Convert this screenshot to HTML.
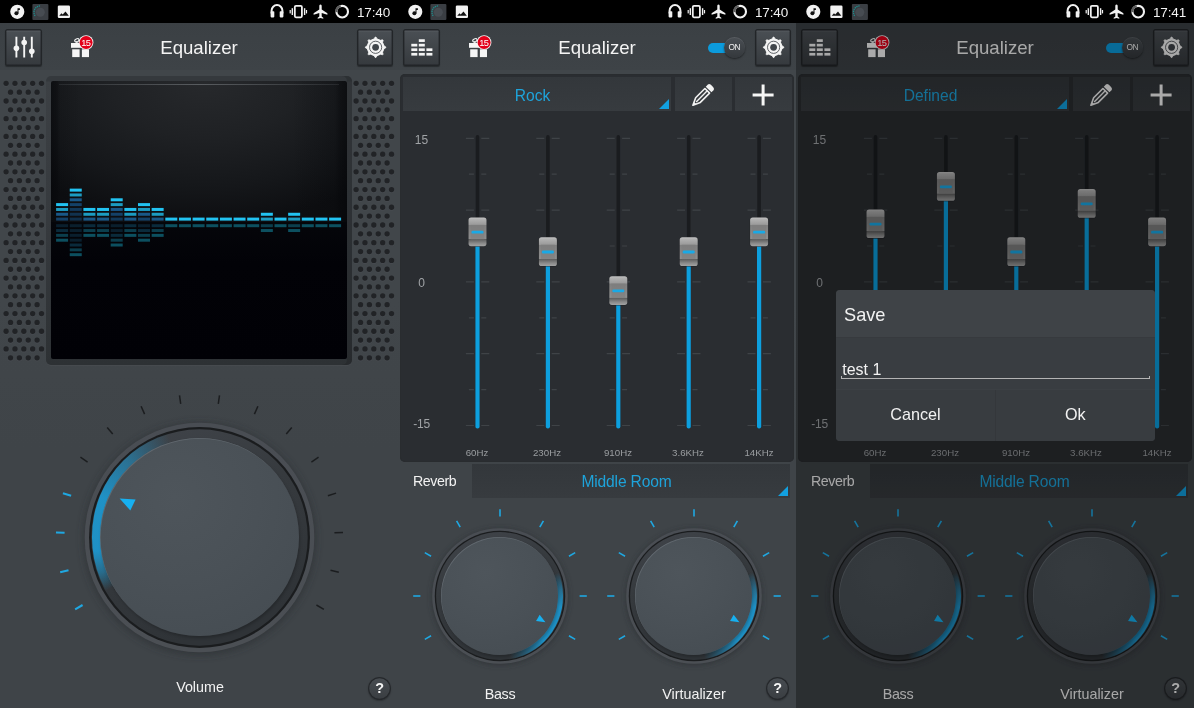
<!DOCTYPE html><html lang="en"><head><meta charset="utf-8"><title>Equalizer</title><style>
*{box-sizing:border-box;margin:0;padding:0}
html,body{width:1194px;height:708px;overflow:hidden;background:#3e4347}
body{font-family:"Liberation Sans",sans-serif;position:relative;-webkit-font-smoothing:antialiased}
.p{position:absolute;top:0;width:398px;height:708px;overflow:hidden;background:linear-gradient(#41464a 0,#41464a 300px,#3f4448 450px)}
.sb{position:absolute;left:0;top:0;width:398px;height:23px;background:#000}
.sbi{position:absolute;left:0;top:0}
.title,.lbl,.rv,.dd,.db,.hz,.time,.dlg,.help,.swk,.gift{will-change:transform}
.time{position:absolute;left:356.6px;top:4.6px;font-size:13.5px;line-height:16px;color:#f2f2f2;letter-spacing:-0.15px}
.tb{position:absolute;left:0;top:23px;width:398px;height:47.4px;background:linear-gradient(#3b4044,#3e4347)}
.btn{position:absolute;top:6.2px;width:36.2px;height:36.4px;border-radius:2px;background:linear-gradient(#4b5055,#35393d);box-shadow:inset 0 0 0 1.4px #222528, inset 0 2.4px 0 0 rgba(255,255,255,0.07), 0 1px 1px rgba(0,0,0,0.35)}
.btn svg{position:absolute;left:0;top:0}
.gift{position:absolute;left:68px;top:11px}
.title{position:absolute;left:99px;width:200px;top:14.3px;text-align:center;color:#f4f4f4;font-size:18.6px;line-height:22px}
.sw{position:absolute;left:309px;top:14px;width:50px;height:22px}
.swt{position:absolute;left:1px;top:5.7px;width:30px;height:10px;border-radius:5px;background:#0c9bdc}
.swk{position:absolute;left:17.2px;top:0.4px;width:20.6px;height:20.6px;border-radius:50%;background:linear-gradient(#4a4f54,#34383c);box-shadow:0 1px 2px rgba(0,0,0,0.5),inset 0 1px 0 rgba(255,255,255,0.08);color:#f2f2f2;font-size:8.4px;line-height:20.6px;text-align:center;letter-spacing:-0.5px}
.dots{position:absolute}
.frame{position:absolute;left:46px;top:76px;width:306px;height:289px;border-radius:5px;background:linear-gradient(#35393d 0,#35393d 5px,#3c4044 6px,#363a3e 50%,#2d3134 100%);box-shadow:0 1px 0 rgba(255,255,255,0.03),inset -5px 0 0 rgba(28,31,34,0.35)}
.screen{position:absolute;left:5px;top:5px;width:296px;height:278px;border-radius:2px;background:linear-gradient(90deg,rgba(4,5,8,0.55) 0,rgba(4,5,8,0.4) 6px,rgba(4,5,8,0.12) 9px,rgba(4,5,8,0) 30px,rgba(4,5,8,0) 240px,rgba(4,5,8,0.2) 284px,rgba(4,5,8,0.45) 289px,rgba(4,5,8,0.6) 100%) 0 0/100% 141px no-repeat,radial-gradient(ellipse 80% 100% at 52% 0%,#27292c 0%,#1f2124 40%,#15171a 75%,#0d0e11 100%) 0 0/100% 141px no-repeat,linear-gradient(#05060a 0%,#020207 30%,#010106 100%) 0 141px/100% 137px no-repeat;background-color:#020207;overflow:hidden}
.gl{position:absolute;left:8px;right:8px;top:2.7px;height:1.8px;background:linear-gradient(90deg,rgba(80,84,88,0.3),rgba(110,114,118,0.7) 50%,rgba(80,84,88,0.3));filter:blur(0.4px)}
.spec{position:absolute;left:0;top:0}
.knob{position:absolute}
.knob svg{position:absolute;left:0;top:0}
.arc{position:absolute;border-radius:50%}
.face{position:absolute;border-radius:50%;background:radial-gradient(circle at 38% 30%,#4e555b 0%,#4a5157 45%,#444b51 100%);box-shadow:inset 0.6px 0.8px 0.5px rgba(130,137,144,0.4),1px 2px 3px rgba(0,0,0,0.22)}
.lbl{position:absolute;text-align:center;color:#f2f2f2;font-size:14.3px;line-height:18px}
.help{position:absolute;width:23.4px;height:23.4px;border-radius:50%;background:linear-gradient(#484d52,#393d41);box-shadow:inset 0 0 0 1.2px #25282b,0 1px 1.5px rgba(0,0,0,0.25);color:#f6f6f6;font-weight:bold;font-size:14.4px;line-height:23.6px;text-align:center}
.eq{position:absolute;left:2px;top:73.6px;width:394px;height:388.6px;border-radius:5px;background:#2a2d31;box-shadow:inset 0 0 0 1px #292c2f;padding:0}
.eqi{position:absolute;left:0.5px;top:0;width:393px;height:388.6px}
.dd{position:absolute;background:linear-gradient(#33373b,#373b3f);color:#1ea3da;font-size:15.6px;text-align:center}
.dd span{display:block;line-height:34px;position:relative;top:2px;padding-right:9px}
.rvd span{top:0.6px;letter-spacing:-0.15px}
.dd svg{position:absolute;left:0;top:0}
.tri{position:absolute;right:2px;bottom:2px;width:0;height:0;border-left:10.5px solid transparent;border-bottom:10px solid #12a0e0}
.sl{position:absolute;left:0;top:37px}
.db{position:absolute;left:0;width:41px;text-align:center;color:#a0a3a6;font-size:12px;line-height:14px}
.hz{position:absolute;top:373.9px;width:60px;text-align:center;color:#9b9ea1;font-size:9.7px;line-height:12px}
.rv{position:absolute;left:14.8px;top:472px;color:#f2f2f2;font-size:14.2px;line-height:18px;letter-spacing:-0.4px}
.rvd{left:73.8px;top:464.4px;width:318px;height:34.4px}
.dim{position:absolute;left:0;top:23px;width:398px;height:685px;background:rgba(0,0,0,0.31)}
.dlg{position:absolute;left:39.6px;top:289.6px;width:318.8px;height:151.4px;border-radius:4px;background:#393d41;overflow:hidden;color:#f2f2f2}
.dt{height:48px;background:#3f4347;border-bottom:1px solid #373a3e;padding:13.8px 0 0 8px;font-size:18.2px;line-height:22px}
.dbody{height:51.4px;position:relative}
.inp{position:absolute;left:4.6px;right:4.6px;top:19.5px;height:21.6px;font-size:16px;line-height:23px;padding-left:0.6px;border-bottom:1.3px solid #b4b4b4;border-left:1px solid #b4b4b4;border-right:1px solid #b4b4b4;border-image:linear-gradient(transparent 85%,#b4b4b4 85%) 1}
.dbtn{position:absolute;left:0;right:0;top:99.4px;height:52px;display:flex;background:#383c40;border-top:1px solid #3c4044}
.dbtn div{flex:1;text-align:center;font-size:16.2px;line-height:48px}
.dbtn div+div{border-left:1px solid #34373b}
</style></head><body><div class="p" style="left:0"><div class="sb"><svg class="sbi" width="398" height="23" viewBox="0 0 398 23"><circle cx="17.3" cy="11.85" r="7.05" fill="#f2f2f2"/><circle cx="16.400000000000002" cy="13.2" r="2" fill="#111"/><path d="M17.5 13.2 V8.2 H19.900000000000002 V9.9 H18.5 V13.2 z" fill="#111"/><rect x="32.4" y="3.9" width="16" height="16" rx="1" fill="#3a3e43"/><circle cx="40.3" cy="12.2" r="4.5" fill="#474c52"/><path d="M35.13 15.79 A6.3 6.3 0 0 1 40.3 5.9" fill="none" stroke="#1f8c8c" stroke-width="1.3" stroke-dasharray="1.3 0.7"/><rect x="57.8" y="5.4" width="12.2" height="12.6" rx="1.3" fill="#f2f2f2"/><path d="M59.199999999999996 15.7 l2.3 -2.5 l1.2 1.3 l2.8 -3 l3.3 4.2 z" fill="#111"/><g fill="none" stroke="#f2f2f2" stroke-width="2"><path d="M271.6 13.5 v-3 a5.4 5.4 0 0 1 10.8 0 v3"/></g>
<rect x="270.6" y="11.2" width="3.7" height="6.2" rx="0.8" fill="#f2f2f2"/><rect x="279.7" y="11.2" width="3.7" height="6.2" rx="0.8" fill="#f2f2f2"/>
<rect x="294.8" y="5.9" width="7.1" height="11.4" rx="1.2" fill="none" stroke="#f2f2f2" stroke-width="1.8"/>
<rect x="291.6" y="8.2" width="1.4" height="6.8" fill="#f2f2f2"/><rect x="289.6" y="10" width="1.2" height="3.4" fill="#f2f2f2"/>
<rect x="303.9" y="8.2" width="1.4" height="6.8" fill="#f2f2f2"/><rect x="305.9" y="10" width="1.2" height="3.4" fill="#f2f2f2"/>
<path d="M320.5 4.6 c0.9 0 1.2 0.8 1.2 1.6 v3.4 l5.7 3.6 v1.5 l-5.7 -1.8 v3.6 l1.6 1.2 v1.1 l-2.8 -0.8 l-2.8 0.8 v-1.1 l1.6 -1.2 v-3.6 l-5.7 1.8 v-1.5 l5.7 -3.6 v-3.4 c0 -0.8 0.3 -1.6 1.2 -1.6 z" fill="#f2f2f2"/>
<circle cx="342.2" cy="11.7" r="5.8" fill="none" stroke="#f2f2f2" stroke-width="2.1"/><path d="M336.4 12.2 A5.8 5.8 0 0 1 340.7 6.1" fill="none" stroke="#5e5e5e" stroke-width="2.3"/>
<path d="M342.4 4.4 v3 M339 5 l1.2 2.6" stroke="#000" stroke-width="0" fill="none"/></svg><span class="time">17:40</span></div><div class="tb"><div class="btn" style="left:5.2px;width:36.5px"><svg width="36" height="36" viewBox="4.8 29.5 36 36"><g stroke="#f4f4f4" stroke-width="1.9" stroke-linecap="butt"><path d="M16.2 37.3V58M24 37.3V58M31.6 37.3V58"/></g><circle cx="16.2" cy="48.7" r="2.8" fill="#f4f4f4"/><circle cx="24" cy="43" r="2.8" fill="#f4f4f4"/><circle cx="31.6" cy="51.8" r="2.8" fill="#f4f4f4"/></svg></div><svg class="gift" width="26" height="26" viewBox="68 34 26 26"><ellipse cx="76.9" cy="40.3" rx="2.3" ry="1.5" transform="rotate(-25 76.9 40.3)" fill="none" stroke="#f4f4f4" stroke-width="1.1"/><path d="M76.2 41.4 L77.4 43.2" stroke="#f4f4f4" stroke-width="1.1"/><rect x="71" y="43" width="19" height="4.8" fill="#f6f6f6"/><rect x="72.2" y="49.3" width="7.4" height="7.8" fill="#f6f6f6"/><rect x="81.9" y="49.3" width="7.1" height="7.8" fill="#f6f6f6"/><circle cx="86.1" cy="42.5" r="7.3" fill="#f4f4f4"/><circle cx="86.1" cy="42.5" r="6.5" fill="#e2001a"/><text x="85.8" y="45.7" font-size="9.3" text-anchor="middle" fill="#fff" font-family="Liberation Sans, sans-serif" letter-spacing="-0.5">15</text></svg><div class="title">Equalizer</div><div class="btn" style="left:356.5px"><svg width="36" height="36" viewBox="0 0 36 36"><path d="M17.11 9.93 L18.21 8.06 L18.99 8.06 L20.09 9.93 L23.47 11.33 L25.57 10.78 L26.12 11.33 L25.57 13.43 L26.97 16.81 L28.84 17.91 L28.84 18.69 L26.97 19.79 L25.57 23.17 L26.12 25.27 L25.57 25.82 L23.47 25.27 L20.09 26.67 L18.99 28.54 L18.21 28.54 L17.11 26.67 L13.73 25.27 L11.63 25.82 L11.08 25.27 L11.63 23.17 L10.23 19.79 L8.36 18.69 L8.36 17.91 L10.23 16.81 L11.63 13.43 L11.08 11.33 L11.63 10.78 L13.73 11.33Z" fill="#f4f4f4" stroke="#f4f4f4" stroke-width="0.8" stroke-linejoin="round"/><circle cx="18.6" cy="18.3" r="8.4" fill="#f4f4f4"/><circle cx="18.6" cy="18.3" r="6.1" fill="none" stroke="#3b3f44" stroke-width="0.8"/><circle cx="18.6" cy="18.3" r="3.4" fill="#40454a"/></svg></div></div><svg class="dots" style="left:0px;top:76px" width="46" height="290" viewBox="0 0 46 290"><defs><g id="dla"><circle cx="6.1" cy="0.7" r="2.9" fill="#4a4f54" opacity="0.55"/><circle cx="14.96" cy="0.7" r="2.9" fill="#4a4f54" opacity="0.55"/><circle cx="23.81" cy="0.7" r="2.9" fill="#4a4f54" opacity="0.55"/><circle cx="32.66" cy="0.7" r="2.9" fill="#4a4f54" opacity="0.55"/><circle cx="41.52" cy="0.7" r="2.9" fill="#4a4f54" opacity="0.55"/><circle cx="6.1" cy="0" r="2.65" fill="#212326"/><circle cx="14.96" cy="0" r="2.65" fill="#212326"/><circle cx="23.81" cy="0" r="2.65" fill="#212326"/><circle cx="32.66" cy="0" r="2.65" fill="#212326"/><circle cx="41.52" cy="0" r="2.65" fill="#212326"/></g><g id="dlb"><circle cx="10.53" cy="0.7" r="2.9" fill="#4a4f54" opacity="0.55"/><circle cx="19.38" cy="0.7" r="2.9" fill="#4a4f54" opacity="0.55"/><circle cx="28.24" cy="0.7" r="2.9" fill="#4a4f54" opacity="0.55"/><circle cx="37.09" cy="0.7" r="2.9" fill="#4a4f54" opacity="0.55"/><circle cx="10.53" cy="0" r="2.65" fill="#212326"/><circle cx="19.38" cy="0" r="2.65" fill="#212326"/><circle cx="28.24" cy="0" r="2.65" fill="#212326"/><circle cx="37.09" cy="0" r="2.65" fill="#212326"/></g></defs><use href="#dla" y="7.3"/><use href="#dlb" y="16.15"/><use href="#dla" y="25.01"/><use href="#dlb" y="33.86"/><use href="#dla" y="42.72"/><use href="#dlb" y="51.58"/><use href="#dla" y="60.43"/><use href="#dlb" y="69.28"/><use href="#dla" y="78.14"/><use href="#dlb" y="87"/><use href="#dla" y="95.85"/><use href="#dlb" y="104.7"/><use href="#dla" y="113.56"/><use href="#dlb" y="122.42"/><use href="#dla" y="131.27"/><use href="#dlb" y="140.12"/><use href="#dla" y="148.98"/><use href="#dlb" y="157.83"/><use href="#dla" y="166.69"/><use href="#dlb" y="175.55"/><use href="#dla" y="184.4"/><use href="#dlb" y="193.25"/><use href="#dla" y="202.11"/><use href="#dlb" y="210.97"/><use href="#dla" y="219.82"/><use href="#dlb" y="228.68"/><use href="#dla" y="237.53"/><use href="#dlb" y="246.38"/><use href="#dla" y="255.24"/><use href="#dlb" y="264.1"/><use href="#dla" y="272.95"/><use href="#dlb" y="281.81"/></svg><svg class="dots" style="left:350.4px;top:76px" width="46" height="290" viewBox="0 0 46 290"><defs><g id="dra"><circle cx="6.1" cy="0.7" r="2.9" fill="#4a4f54" opacity="0.55"/><circle cx="14.96" cy="0.7" r="2.9" fill="#4a4f54" opacity="0.55"/><circle cx="23.81" cy="0.7" r="2.9" fill="#4a4f54" opacity="0.55"/><circle cx="32.66" cy="0.7" r="2.9" fill="#4a4f54" opacity="0.55"/><circle cx="41.52" cy="0.7" r="2.9" fill="#4a4f54" opacity="0.55"/><circle cx="6.1" cy="0" r="2.65" fill="#212326"/><circle cx="14.96" cy="0" r="2.65" fill="#212326"/><circle cx="23.81" cy="0" r="2.65" fill="#212326"/><circle cx="32.66" cy="0" r="2.65" fill="#212326"/><circle cx="41.52" cy="0" r="2.65" fill="#212326"/></g><g id="drb"><circle cx="10.53" cy="0.7" r="2.9" fill="#4a4f54" opacity="0.55"/><circle cx="19.38" cy="0.7" r="2.9" fill="#4a4f54" opacity="0.55"/><circle cx="28.24" cy="0.7" r="2.9" fill="#4a4f54" opacity="0.55"/><circle cx="37.09" cy="0.7" r="2.9" fill="#4a4f54" opacity="0.55"/><circle cx="10.53" cy="0" r="2.65" fill="#212326"/><circle cx="19.38" cy="0" r="2.65" fill="#212326"/><circle cx="28.24" cy="0" r="2.65" fill="#212326"/><circle cx="37.09" cy="0" r="2.65" fill="#212326"/></g></defs><use href="#dra" y="7.3"/><use href="#drb" y="16.15"/><use href="#dra" y="25.01"/><use href="#drb" y="33.86"/><use href="#dra" y="42.72"/><use href="#drb" y="51.58"/><use href="#dra" y="60.43"/><use href="#drb" y="69.28"/><use href="#dra" y="78.14"/><use href="#drb" y="87"/><use href="#dra" y="95.85"/><use href="#drb" y="104.7"/><use href="#dra" y="113.56"/><use href="#drb" y="122.42"/><use href="#dra" y="131.27"/><use href="#drb" y="140.12"/><use href="#dra" y="148.98"/><use href="#drb" y="157.83"/><use href="#dra" y="166.69"/><use href="#drb" y="175.55"/><use href="#dra" y="184.4"/><use href="#drb" y="193.25"/><use href="#dra" y="202.11"/><use href="#drb" y="210.97"/><use href="#dra" y="219.82"/><use href="#drb" y="228.68"/><use href="#dra" y="237.53"/><use href="#drb" y="246.38"/><use href="#dra" y="255.24"/><use href="#drb" y="264.1"/><use href="#dra" y="272.95"/><use href="#drb" y="281.81"/></svg><div class="frame"><div class="screen"><div class="gl"></div><svg class="spec" width="296" height="278" viewBox="51 81 296 278"><rect x="56.1" y="217.6" width="12" height="3" fill="#144168"/><rect x="56.1" y="224.2" width="12" height="3" fill="#0c283a" opacity="0.75"/><rect x="56.1" y="212.77" width="12" height="3" fill="#195888"/><rect x="56.1" y="229.03" width="12" height="3" fill="#0d3549" opacity="0.8"/><rect x="56.1" y="207.94" width="12" height="3" fill="#1c9cc2"/><rect x="56.1" y="233.86" width="12" height="3" fill="#0e4c5e" opacity="0.8"/><rect x="56.1" y="203.11" width="12" height="3" fill="#22c3f2"/><rect x="56.1" y="238.69" width="12" height="3" fill="#0f6375" opacity="0.8"/><rect x="69.75" y="217.6" width="12" height="3" fill="#102f4a"/><rect x="69.75" y="224.2" width="12" height="3" fill="#0c283a" opacity="0.75"/><rect x="69.75" y="212.77" width="12" height="3" fill="#11324f"/><rect x="69.75" y="229.03" width="12" height="3" fill="#0c283a" opacity="0.75"/><rect x="69.75" y="207.94" width="12" height="3" fill="#123858"/><rect x="69.75" y="233.86" width="12" height="3" fill="#0c283a" opacity="0.75"/><rect x="69.75" y="203.11" width="12" height="3" fill="#144168"/><rect x="69.75" y="238.69" width="12" height="3" fill="#0c283a" opacity="0.75"/><rect x="69.75" y="198.28" width="12" height="3" fill="#195888"/><rect x="69.75" y="243.52" width="12" height="3" fill="#0d3549" opacity="0.8"/><rect x="69.75" y="193.45" width="12" height="3" fill="#1c9cc2"/><rect x="69.75" y="248.35" width="12" height="3" fill="#0e4c5e" opacity="0.8"/><rect x="69.75" y="188.62" width="12" height="3" fill="#22c3f2"/><rect x="69.75" y="253.18" width="12" height="3" fill="#0f6375" opacity="0.8"/><rect x="83.4" y="217.6" width="12" height="3" fill="#195888"/><rect x="83.4" y="224.2" width="12" height="3" fill="#0d3549" opacity="0.8"/><rect x="83.4" y="212.77" width="12" height="3" fill="#1c9cc2"/><rect x="83.4" y="229.03" width="12" height="3" fill="#0e4c5e" opacity="0.8"/><rect x="83.4" y="207.94" width="12" height="3" fill="#22c3f2"/><rect x="83.4" y="233.86" width="12" height="3" fill="#0f6375" opacity="0.8"/><rect x="97.05" y="217.6" width="12" height="3" fill="#195888"/><rect x="97.05" y="224.2" width="12" height="3" fill="#0d3549" opacity="0.8"/><rect x="97.05" y="212.77" width="12" height="3" fill="#1c9cc2"/><rect x="97.05" y="229.03" width="12" height="3" fill="#0e4c5e" opacity="0.8"/><rect x="97.05" y="207.94" width="12" height="3" fill="#22c3f2"/><rect x="97.05" y="233.86" width="12" height="3" fill="#0f6375" opacity="0.8"/><rect x="110.7" y="217.6" width="12" height="3" fill="#123858"/><rect x="110.7" y="224.2" width="12" height="3" fill="#0c283a" opacity="0.75"/><rect x="110.7" y="212.77" width="12" height="3" fill="#144168"/><rect x="110.7" y="229.03" width="12" height="3" fill="#0c283a" opacity="0.75"/><rect x="110.7" y="207.94" width="12" height="3" fill="#195888"/><rect x="110.7" y="233.86" width="12" height="3" fill="#0d3549" opacity="0.8"/><rect x="110.7" y="203.11" width="12" height="3" fill="#1c9cc2"/><rect x="110.7" y="238.69" width="12" height="3" fill="#0e4c5e" opacity="0.8"/><rect x="110.7" y="198.28" width="12" height="3" fill="#22c3f2"/><rect x="110.7" y="243.52" width="12" height="3" fill="#0f6375" opacity="0.8"/><rect x="124.35" y="217.6" width="12" height="3" fill="#195888"/><rect x="124.35" y="224.2" width="12" height="3" fill="#0d3549" opacity="0.8"/><rect x="124.35" y="212.77" width="12" height="3" fill="#1c9cc2"/><rect x="124.35" y="229.03" width="12" height="3" fill="#0e4c5e" opacity="0.8"/><rect x="124.35" y="207.94" width="12" height="3" fill="#22c3f2"/><rect x="124.35" y="233.86" width="12" height="3" fill="#0f6375" opacity="0.8"/><rect x="138" y="217.6" width="12" height="3" fill="#144168"/><rect x="138" y="224.2" width="12" height="3" fill="#0c283a" opacity="0.75"/><rect x="138" y="212.77" width="12" height="3" fill="#195888"/><rect x="138" y="229.03" width="12" height="3" fill="#0d3549" opacity="0.8"/><rect x="138" y="207.94" width="12" height="3" fill="#1c9cc2"/><rect x="138" y="233.86" width="12" height="3" fill="#0e4c5e" opacity="0.8"/><rect x="138" y="203.11" width="12" height="3" fill="#22c3f2"/><rect x="138" y="238.69" width="12" height="3" fill="#0f6375" opacity="0.8"/><rect x="151.65" y="217.6" width="12" height="3" fill="#195888"/><rect x="151.65" y="224.2" width="12" height="3" fill="#0d3549" opacity="0.8"/><rect x="151.65" y="212.77" width="12" height="3" fill="#1c9cc2"/><rect x="151.65" y="229.03" width="12" height="3" fill="#0e4c5e" opacity="0.8"/><rect x="151.65" y="207.94" width="12" height="3" fill="#22c3f2"/><rect x="151.65" y="233.86" width="12" height="3" fill="#0f6375" opacity="0.8"/><rect x="165.3" y="217.6" width="12" height="3" fill="#22c3f2"/><rect x="165.3" y="224.2" width="12" height="3" fill="#0f6375" opacity="0.8"/><rect x="178.95" y="217.6" width="12" height="3" fill="#22c3f2"/><rect x="178.95" y="224.2" width="12" height="3" fill="#0f6375" opacity="0.8"/><rect x="192.6" y="217.6" width="12" height="3" fill="#22c3f2"/><rect x="192.6" y="224.2" width="12" height="3" fill="#0f6375" opacity="0.8"/><rect x="206.25" y="217.6" width="12" height="3" fill="#22c3f2"/><rect x="206.25" y="224.2" width="12" height="3" fill="#0f6375" opacity="0.8"/><rect x="219.9" y="217.6" width="12" height="3" fill="#22c3f2"/><rect x="219.9" y="224.2" width="12" height="3" fill="#0f6375" opacity="0.8"/><rect x="233.55" y="217.6" width="12" height="3" fill="#22c3f2"/><rect x="233.55" y="224.2" width="12" height="3" fill="#0f6375" opacity="0.8"/><rect x="247.2" y="217.6" width="12" height="3" fill="#22c3f2"/><rect x="247.2" y="224.2" width="12" height="3" fill="#0f6375" opacity="0.8"/><rect x="260.85" y="217.6" width="12" height="3" fill="#1c9cc2"/><rect x="260.85" y="224.2" width="12" height="3" fill="#0e4c5e" opacity="0.8"/><rect x="260.85" y="212.77" width="12" height="3" fill="#22c3f2"/><rect x="260.85" y="229.03" width="12" height="3" fill="#0f6375" opacity="0.8"/><rect x="274.5" y="217.6" width="12" height="3" fill="#22c3f2"/><rect x="274.5" y="224.2" width="12" height="3" fill="#0f6375" opacity="0.8"/><rect x="288.15" y="217.6" width="12" height="3" fill="#1c9cc2"/><rect x="288.15" y="224.2" width="12" height="3" fill="#0e4c5e" opacity="0.8"/><rect x="288.15" y="212.77" width="12" height="3" fill="#22c3f2"/><rect x="288.15" y="229.03" width="12" height="3" fill="#0f6375" opacity="0.8"/><rect x="301.8" y="217.6" width="12" height="3" fill="#22c3f2"/><rect x="301.8" y="224.2" width="12" height="3" fill="#0f6375" opacity="0.8"/><rect x="315.45" y="217.6" width="12" height="3" fill="#22c3f2"/><rect x="315.45" y="224.2" width="12" height="3" fill="#0f6375" opacity="0.8"/><rect x="329.1" y="217.6" width="12" height="3" fill="#22c3f2"/><rect x="329.1" y="224.2" width="12" height="3" fill="#0f6375" opacity="0.8"/></svg></div></div><div class="knob" style="left:41.1px;top:378.8px;width:317px;height:317px"><svg width="317" height="317" viewBox="-158.5 -158.5 317 317"><defs><linearGradient id="k1o" x1="0" y1="0" x2="0" y2="1"><stop offset="0" stop-color="#494d53"/><stop offset="1" stop-color="#4b4f54"/></linearGradient><linearGradient id="k1i" x1="0" y1="0" x2="0.35" y2="1"><stop offset="0" stop-color="#41454b"/><stop offset="0.45" stop-color="#363a3e"/><stop offset="1" stop-color="#2f3337"/></linearGradient><filter id="k1b" x="-20%" y="-20%" width="140%" height="140%"><feGaussianBlur stdDeviation="3.8"/></filter></defs><circle cx="0" cy="1.5" r="116.3" fill="#2a2d31" opacity="0.6" filter="url(#k1b)"/><line x1="-116.91" y1="67.5" x2="-124.36" y2="71.8" stroke="#1fa8e2" stroke-width="2.1"/><line x1="-130.99" y1="32.66" x2="-139.33" y2="34.74" stroke="#1fa8e2" stroke-width="2.1"/><line x1="-134.92" y1="-4.71" x2="-143.51" y2="-5.01" stroke="#1fa8e2" stroke-width="2.1"/><line x1="-128.39" y1="-41.72" x2="-136.57" y2="-44.37" stroke="#1fa8e2" stroke-width="2.1"/><line x1="-111.92" y1="-75.49" x2="-119.05" y2="-80.3" stroke="#1b1d1f" stroke-width="1.5"/><line x1="-86.78" y1="-103.42" x2="-92.3" y2="-110" stroke="#1b1d1f" stroke-width="1.5"/><line x1="-54.91" y1="-123.33" x2="-58.41" y2="-131.19" stroke="#1b1d1f" stroke-width="1.5"/><line x1="-18.79" y1="-133.69" x2="-19.99" y2="-142.2" stroke="#1b1d1f" stroke-width="1.5"/><line x1="18.79" y1="-133.69" x2="19.99" y2="-142.2" stroke="#1b1d1f" stroke-width="1.5"/><line x1="54.91" y1="-123.33" x2="58.41" y2="-131.19" stroke="#1b1d1f" stroke-width="1.5"/><line x1="86.78" y1="-103.42" x2="92.3" y2="-110" stroke="#1b1d1f" stroke-width="1.5"/><line x1="111.92" y1="-75.49" x2="119.05" y2="-80.3" stroke="#1b1d1f" stroke-width="1.5"/><line x1="128.39" y1="-41.72" x2="136.57" y2="-44.37" stroke="#1b1d1f" stroke-width="1.5"/><line x1="134.92" y1="-4.71" x2="143.51" y2="-5.01" stroke="#1b1d1f" stroke-width="1.5"/><line x1="130.99" y1="32.66" x2="139.33" y2="34.74" stroke="#1b1d1f" stroke-width="1.5"/><line x1="116.91" y1="67.5" x2="124.36" y2="71.8" stroke="#1b1d1f" stroke-width="1.5"/><circle r="114.8" fill="url(#k1o)"/><circle r="110.44" fill="#1a1c1e"/><circle r="108.2" fill="url(#k1i)"/></svg><div class="arc" style="left:50.65px;top:50.65px;width:215.71px;height:215.71px;background:conic-gradient(from 0deg,rgba(30,150,205,0) 0deg,rgba(30,150,205,0) 240deg,rgba(30,150,205,0.55) 250deg,rgba(30,150,205,0.95) 262deg,rgba(30,150,205,0.95) 292deg,rgba(30,150,205,0.55) 318deg,rgba(30,150,205,0) 343deg,rgba(30,150,205,0) 360deg)"></div><div class="face" style="left:59.31px;top:59.31px;width:198.37px;height:198.37px"></div><svg style="position:absolute;left:0;top:0" width="317" height="317" viewBox="-158.5 -158.5 317 317"><path d="M-79.86 -38.95L-63.91 -37.88L-69.19 -27.04Z" fill="#17b0f0"/></svg></div><div class="lbl" style="left:100px;width:200px;top:678px">Volume</div><div class="help" style="left:367.8px;top:677.4px">?</div></div><div class="p" style="left:398px"><div class="sb"><svg class="sbi" width="398" height="23" viewBox="0 0 398 23"><circle cx="17.3" cy="11.85" r="7.05" fill="#f2f2f2"/><circle cx="16.400000000000002" cy="13.2" r="2" fill="#111"/><path d="M17.5 13.2 V8.2 H19.900000000000002 V9.9 H18.5 V13.2 z" fill="#111"/><rect x="32.4" y="3.9" width="16" height="16" rx="1" fill="#3a3e43"/><circle cx="40.3" cy="12.2" r="4.5" fill="#474c52"/><path d="M35.13 15.79 A6.3 6.3 0 0 1 40.3 5.9" fill="none" stroke="#1f8c8c" stroke-width="1.3" stroke-dasharray="1.3 0.7"/><rect x="57.8" y="5.4" width="12.2" height="12.6" rx="1.3" fill="#f2f2f2"/><path d="M59.199999999999996 15.7 l2.3 -2.5 l1.2 1.3 l2.8 -3 l3.3 4.2 z" fill="#111"/><g fill="none" stroke="#f2f2f2" stroke-width="2"><path d="M271.6 13.5 v-3 a5.4 5.4 0 0 1 10.8 0 v3"/></g>
<rect x="270.6" y="11.2" width="3.7" height="6.2" rx="0.8" fill="#f2f2f2"/><rect x="279.7" y="11.2" width="3.7" height="6.2" rx="0.8" fill="#f2f2f2"/>
<rect x="294.8" y="5.9" width="7.1" height="11.4" rx="1.2" fill="none" stroke="#f2f2f2" stroke-width="1.8"/>
<rect x="291.6" y="8.2" width="1.4" height="6.8" fill="#f2f2f2"/><rect x="289.6" y="10" width="1.2" height="3.4" fill="#f2f2f2"/>
<rect x="303.9" y="8.2" width="1.4" height="6.8" fill="#f2f2f2"/><rect x="305.9" y="10" width="1.2" height="3.4" fill="#f2f2f2"/>
<path d="M320.5 4.6 c0.9 0 1.2 0.8 1.2 1.6 v3.4 l5.7 3.6 v1.5 l-5.7 -1.8 v3.6 l1.6 1.2 v1.1 l-2.8 -0.8 l-2.8 0.8 v-1.1 l1.6 -1.2 v-3.6 l-5.7 1.8 v-1.5 l5.7 -3.6 v-3.4 c0 -0.8 0.3 -1.6 1.2 -1.6 z" fill="#f2f2f2"/>
<circle cx="342.2" cy="11.7" r="5.8" fill="none" stroke="#f2f2f2" stroke-width="2.1"/><path d="M336.4 12.2 A5.8 5.8 0 0 1 340.7 6.1" fill="none" stroke="#5e5e5e" stroke-width="2.3"/>
<path d="M342.4 4.4 v3 M339 5 l1.2 2.6" stroke="#000" stroke-width="0" fill="none"/></svg><span class="time">17:40</span></div><div class="tb"><div class="btn" style="left:5.2px;width:36.5px"><svg width="36" height="36" viewBox="4.8 29.5 36 36"><rect x="13.1" y="53.4" width="6" height="2.7" fill="#f4f4f4"/><rect x="13.1" y="48.85" width="6" height="2.7" fill="#f4f4f4"/><rect x="13.1" y="44.3" width="6" height="2.7" fill="#f4f4f4"/><rect x="20.6" y="53.4" width="6" height="2.7" fill="#f4f4f4"/><rect x="20.6" y="48.85" width="6" height="2.7" fill="#f4f4f4"/><rect x="20.6" y="44.3" width="6" height="2.7" fill="#f4f4f4"/><rect x="20.6" y="39.75" width="6" height="2.7" fill="#f4f4f4"/><rect x="28.2" y="53.4" width="6" height="2.7" fill="#f4f4f4"/><rect x="28.2" y="48.85" width="6" height="2.7" fill="#f4f4f4"/></svg></div><svg class="gift" width="26" height="26" viewBox="68 34 26 26"><ellipse cx="76.9" cy="40.3" rx="2.3" ry="1.5" transform="rotate(-25 76.9 40.3)" fill="none" stroke="#f4f4f4" stroke-width="1.1"/><path d="M76.2 41.4 L77.4 43.2" stroke="#f4f4f4" stroke-width="1.1"/><rect x="71" y="43" width="19" height="4.8" fill="#f6f6f6"/><rect x="72.2" y="49.3" width="7.4" height="7.8" fill="#f6f6f6"/><rect x="81.9" y="49.3" width="7.1" height="7.8" fill="#f6f6f6"/><circle cx="86.1" cy="42.5" r="7.3" fill="#f4f4f4"/><circle cx="86.1" cy="42.5" r="6.5" fill="#e2001a"/><text x="85.8" y="45.7" font-size="9.3" text-anchor="middle" fill="#fff" font-family="Liberation Sans, sans-serif" letter-spacing="-0.5">15</text></svg><div class="title">Equalizer</div><div class="sw"><div class="swt"></div><div class="swk">ON</div></div><div class="btn" style="left:356.5px"><svg width="36" height="36" viewBox="0 0 36 36"><path d="M17.11 9.93 L18.21 8.06 L18.99 8.06 L20.09 9.93 L23.47 11.33 L25.57 10.78 L26.12 11.33 L25.57 13.43 L26.97 16.81 L28.84 17.91 L28.84 18.69 L26.97 19.79 L25.57 23.17 L26.12 25.27 L25.57 25.82 L23.47 25.27 L20.09 26.67 L18.99 28.54 L18.21 28.54 L17.11 26.67 L13.73 25.27 L11.63 25.82 L11.08 25.27 L11.63 23.17 L10.23 19.79 L8.36 18.69 L8.36 17.91 L10.23 16.81 L11.63 13.43 L11.08 11.33 L11.63 10.78 L13.73 11.33Z" fill="#f4f4f4" stroke="#f4f4f4" stroke-width="0.8" stroke-linejoin="round"/><circle cx="18.6" cy="18.3" r="8.4" fill="#f4f4f4"/><circle cx="18.6" cy="18.3" r="6.1" fill="none" stroke="#3b3f44" stroke-width="0.8"/><circle cx="18.6" cy="18.3" r="3.4" fill="#40454a"/></svg></div></div><div class="eq"><div class="eqi"><div class="dd" style="left:2.5px;top:3px;width:268px;height:34px"><span>Rock</span><i class="tri"></i></div><div class="dd" style="left:274.5px;top:3px;width:56.5px;height:34px"><svg width="56" height="34" viewBox="675 76.5 56 34"><path d="M692.9 104.7L700.32 101.94L709.59 92.68L704.92 88.01L695.66 97.28Z" fill="none" stroke="#f2f2f2" stroke-width="1.6" stroke-linejoin="round"/><path d="M696.15 101.45L707.25 90.35" fill="none" stroke="#f2f2f2" stroke-width="1.4"/><path d="M711.44 91.85L713.57 89.73Q714.84 87.89 712.13 85.47Q709.71 82.76 707.87 84.03L705.75 86.16Z" fill="#f2f2f2"/><path d="M692.9 104.7L696.21 103.49L694.11 101.39Z" fill="#f2f2f2"/></svg></div><div class="dd" style="left:334.5px;top:3px;width:56.5px;height:34px"><svg width="56" height="34" viewBox="735 76.5 56 34"><path d="M752.6 94.5H773.6M763.1 84V105" stroke="#f6f6f6" stroke-width="3" fill="none"/></svg></div><svg class="sl" width="393" height="352" viewBox="400.5 110.5 393 352"><defs><linearGradient id="th" x1="0" y1="0" x2="0" y2="1"><stop offset="0" stop-color="#c4c4c4"/><stop offset="0.06" stop-color="#b2b2b2"/><stop offset="0.25" stop-color="#9a9a9a"/><stop offset="0.26" stop-color="#808080"/><stop offset="0.5" stop-color="#868686"/><stop offset="0.74" stop-color="#8e8e8e"/><stop offset="0.76" stop-color="#5c5c5c"/><stop offset="0.9" stop-color="#8a8a8a"/><stop offset="1" stop-color="#a2a2a2"/></linearGradient></defs><path d="M465.4 137.8h8M480.8 137.8h8" stroke="#3f4347" stroke-width="1.2"/><path d="M468.4 173.7h5M480.8 173.7h5" stroke="#3f4347" stroke-width="1.2"/><path d="M465.4 209.6h8M480.8 209.6h8" stroke="#3f4347" stroke-width="1.2"/><path d="M468.4 245.5h5M480.8 245.5h5" stroke="#3f4347" stroke-width="1.2"/><path d="M465.4 281.4h8M480.8 281.4h8" stroke="#3f4347" stroke-width="1.2"/><path d="M468.4 317.3h5M480.8 317.3h5" stroke="#3f4347" stroke-width="1.2"/><path d="M465.4 353.2h8M480.8 353.2h8" stroke="#3f4347" stroke-width="1.2"/><path d="M468.4 389.1h5M480.8 389.1h5" stroke="#3f4347" stroke-width="1.2"/><path d="M465.4 425h8M480.8 425h8" stroke="#3f4347" stroke-width="1.2"/><rect x="475.2" y="134.6" width="3.6" height="293" rx="1.8" fill="#1a1c1f"/><rect x="474.9" y="231.5" width="4.2" height="196.5" rx="2" fill="#0d9fde"/><rect x="467.6" y="216.9" width="18.8" height="29.6" rx="3" fill="#1d1f22" opacity="0.55"/><rect x="468" y="217" width="18" height="28.7" rx="2.6" fill="url(#th)"/><rect x="470.1" y="224.3" width="13.8" height="14.6" fill="#7c7c7c" opacity="0.55"/><rect x="471" y="230.3" width="12" height="2.8" rx="1.2" fill="#19a9e6"/><path d="M535.8 137.8h8M551.2 137.8h8" stroke="#3f4347" stroke-width="1.2"/><path d="M538.8 173.7h5M551.2 173.7h5" stroke="#3f4347" stroke-width="1.2"/><path d="M535.8 209.6h8M551.2 209.6h8" stroke="#3f4347" stroke-width="1.2"/><path d="M538.8 245.5h5M551.2 245.5h5" stroke="#3f4347" stroke-width="1.2"/><path d="M535.8 281.4h8M551.2 281.4h8" stroke="#3f4347" stroke-width="1.2"/><path d="M538.8 317.3h5M551.2 317.3h5" stroke="#3f4347" stroke-width="1.2"/><path d="M535.8 353.2h8M551.2 353.2h8" stroke="#3f4347" stroke-width="1.2"/><path d="M538.8 389.1h5M551.2 389.1h5" stroke="#3f4347" stroke-width="1.2"/><path d="M535.8 425h8M551.2 425h8" stroke="#3f4347" stroke-width="1.2"/><rect x="545.6" y="134.6" width="3.6" height="293" rx="1.8" fill="#1a1c1f"/><rect x="545.3" y="251.3" width="4.2" height="176.7" rx="2" fill="#0d9fde"/><rect x="538" y="236.7" width="18.8" height="29.6" rx="3" fill="#1d1f22" opacity="0.55"/><rect x="538.4" y="236.8" width="18" height="28.7" rx="2.6" fill="url(#th)"/><rect x="540.5" y="244.1" width="13.8" height="14.6" fill="#7c7c7c" opacity="0.55"/><rect x="541.4" y="250.1" width="12" height="2.8" rx="1.2" fill="#19a9e6"/><path d="M606.2 137.8h8M621.6 137.8h8" stroke="#3f4347" stroke-width="1.2"/><path d="M609.2 173.7h5M621.6 173.7h5" stroke="#3f4347" stroke-width="1.2"/><path d="M606.2 209.6h8M621.6 209.6h8" stroke="#3f4347" stroke-width="1.2"/><path d="M609.2 245.5h5M621.6 245.5h5" stroke="#3f4347" stroke-width="1.2"/><path d="M606.2 281.4h8M621.6 281.4h8" stroke="#3f4347" stroke-width="1.2"/><path d="M609.2 317.3h5M621.6 317.3h5" stroke="#3f4347" stroke-width="1.2"/><path d="M606.2 353.2h8M621.6 353.2h8" stroke="#3f4347" stroke-width="1.2"/><path d="M609.2 389.1h5M621.6 389.1h5" stroke="#3f4347" stroke-width="1.2"/><path d="M606.2 425h8M621.6 425h8" stroke="#3f4347" stroke-width="1.2"/><rect x="616" y="134.6" width="3.6" height="293" rx="1.8" fill="#1a1c1f"/><rect x="615.7" y="290.2" width="4.2" height="137.8" rx="2" fill="#0d9fde"/><rect x="608.4" y="275.6" width="18.8" height="29.6" rx="3" fill="#1d1f22" opacity="0.55"/><rect x="608.8" y="275.7" width="18" height="28.7" rx="2.6" fill="url(#th)"/><rect x="610.9" y="283" width="13.8" height="14.6" fill="#7c7c7c" opacity="0.55"/><rect x="611.8" y="289" width="12" height="2.8" rx="1.2" fill="#19a9e6"/><path d="M676.6 137.8h8M692 137.8h8" stroke="#3f4347" stroke-width="1.2"/><path d="M679.6 173.7h5M692 173.7h5" stroke="#3f4347" stroke-width="1.2"/><path d="M676.6 209.6h8M692 209.6h8" stroke="#3f4347" stroke-width="1.2"/><path d="M679.6 245.5h5M692 245.5h5" stroke="#3f4347" stroke-width="1.2"/><path d="M676.6 281.4h8M692 281.4h8" stroke="#3f4347" stroke-width="1.2"/><path d="M679.6 317.3h5M692 317.3h5" stroke="#3f4347" stroke-width="1.2"/><path d="M676.6 353.2h8M692 353.2h8" stroke="#3f4347" stroke-width="1.2"/><path d="M679.6 389.1h5M692 389.1h5" stroke="#3f4347" stroke-width="1.2"/><path d="M676.6 425h8M692 425h8" stroke="#3f4347" stroke-width="1.2"/><rect x="686.4" y="134.6" width="3.6" height="293" rx="1.8" fill="#1a1c1f"/><rect x="686.1" y="251.3" width="4.2" height="176.7" rx="2" fill="#0d9fde"/><rect x="678.8" y="236.7" width="18.8" height="29.6" rx="3" fill="#1d1f22" opacity="0.55"/><rect x="679.2" y="236.8" width="18" height="28.7" rx="2.6" fill="url(#th)"/><rect x="681.3" y="244.1" width="13.8" height="14.6" fill="#7c7c7c" opacity="0.55"/><rect x="682.2" y="250.1" width="12" height="2.8" rx="1.2" fill="#19a9e6"/><path d="M747 137.8h8M762.4 137.8h8" stroke="#3f4347" stroke-width="1.2"/><path d="M750 173.7h5M762.4 173.7h5" stroke="#3f4347" stroke-width="1.2"/><path d="M747 209.6h8M762.4 209.6h8" stroke="#3f4347" stroke-width="1.2"/><path d="M750 245.5h5M762.4 245.5h5" stroke="#3f4347" stroke-width="1.2"/><path d="M747 281.4h8M762.4 281.4h8" stroke="#3f4347" stroke-width="1.2"/><path d="M750 317.3h5M762.4 317.3h5" stroke="#3f4347" stroke-width="1.2"/><path d="M747 353.2h8M762.4 353.2h8" stroke="#3f4347" stroke-width="1.2"/><path d="M750 389.1h5M762.4 389.1h5" stroke="#3f4347" stroke-width="1.2"/><path d="M747 425h8M762.4 425h8" stroke="#3f4347" stroke-width="1.2"/><rect x="756.8" y="134.6" width="3.6" height="293" rx="1.8" fill="#1a1c1f"/><rect x="756.5" y="231.5" width="4.2" height="196.5" rx="2" fill="#0d9fde"/><rect x="749.2" y="216.9" width="18.8" height="29.6" rx="3" fill="#1d1f22" opacity="0.55"/><rect x="749.6" y="217" width="18" height="28.7" rx="2.6" fill="url(#th)"/><rect x="751.7" y="224.3" width="13.8" height="14.6" fill="#7c7c7c" opacity="0.55"/><rect x="752.6" y="230.3" width="12" height="2.8" rx="1.2" fill="#19a9e6"/></svg><div class="db" style="top:59.4px">15</div><div class="db" style="top:202px">0</div><div class="db" style="top:343.8px;letter-spacing:-0.2px">-15</div><div class="hz" style="left:46.5px">60Hz</div><div class="hz" style="left:116.9px">230Hz</div><div class="hz" style="left:187.3px">910Hz</div><div class="hz" style="left:257.7px">3.6KHz</div><div class="hz" style="left:328.1px">14KHz</div></div></div><div class="rv">Reverb</div><div class="dd rvd"><span>Middle Room</span><i class="tri"></i></div><div class="knob" style="left:6.8px;top:501px;width:190px;height:190px"><svg width="190" height="190" viewBox="-95 -95 190 190"><defs><linearGradient id="k2ao" x1="0" y1="0" x2="0" y2="1"><stop offset="0" stop-color="#494d53"/><stop offset="1" stop-color="#4b4f54"/></linearGradient><linearGradient id="k2ai" x1="0" y1="0" x2="0.35" y2="1"><stop offset="0" stop-color="#41454b"/><stop offset="0.45" stop-color="#363a3e"/><stop offset="1" stop-color="#2f3337"/></linearGradient><filter id="k2ab" x="-20%" y="-20%" width="140%" height="140%"><feGaussianBlur stdDeviation="2.57"/></filter></defs><circle cx="0" cy="0.89" r="68.69" fill="#2a2d31" opacity="0.6" filter="url(#k2ab)"/><line x1="68.94" y1="39.8" x2="75.17" y2="43.4" stroke="#1fa8e2" stroke-width="1.6"/><line x1="79.6" y1="-0" x2="86.8" y2="-0" stroke="#1fa8e2" stroke-width="1.6"/><line x1="68.94" y1="-39.8" x2="75.17" y2="-43.4" stroke="#1fa8e2" stroke-width="1.6"/><line x1="39.8" y1="-68.94" x2="43.4" y2="-75.17" stroke="#1fa8e2" stroke-width="1.6"/><line x1="0" y1="-79.6" x2="0" y2="-86.8" stroke="#1fa8e2" stroke-width="1.6"/><line x1="-39.8" y1="-68.94" x2="-43.4" y2="-75.17" stroke="#1fa8e2" stroke-width="1.6"/><line x1="-68.94" y1="-39.8" x2="-75.17" y2="-43.4" stroke="#1fa8e2" stroke-width="1.6"/><line x1="-79.6" y1="-0" x2="-86.8" y2="-0" stroke="#1fa8e2" stroke-width="1.6"/><line x1="-68.94" y1="39.8" x2="-75.17" y2="43.4" stroke="#1fa8e2" stroke-width="1.6"/><circle r="67.8" fill="url(#k2ao)"/><circle r="65.22" fill="#1a1c1e"/><circle r="63.9" fill="url(#k2ai)"/></svg><div class="arc" style="left:31.3px;top:31.3px;width:127.4px;height:127.4px;background:conic-gradient(from 0deg,rgba(30,150,205,0) 0deg,rgba(30,150,205,0) 68deg,rgba(30,150,205,0.6) 85deg,rgba(30,150,205,0.95) 100deg,rgba(30,150,205,0.95) 135deg,rgba(30,150,205,0.5) 152deg,rgba(30,150,205,0) 170deg,rgba(30,150,205,0) 360deg)"></div><div class="face" style="left:36.42px;top:36.42px;width:117.16px;height:117.16px"></div><svg style="position:absolute;left:0;top:0" width="190" height="190" viewBox="-95 -95 190 190"><path d="M45.45 26.24L36.09 24.95L39.65 18.78Z" fill="#17b0f0"/></svg></div><div class="knob" style="left:200.8px;top:501px;width:190px;height:190px"><svg width="190" height="190" viewBox="-95 -95 190 190"><defs><linearGradient id="k3ao" x1="0" y1="0" x2="0" y2="1"><stop offset="0" stop-color="#494d53"/><stop offset="1" stop-color="#4b4f54"/></linearGradient><linearGradient id="k3ai" x1="0" y1="0" x2="0.35" y2="1"><stop offset="0" stop-color="#41454b"/><stop offset="0.45" stop-color="#363a3e"/><stop offset="1" stop-color="#2f3337"/></linearGradient><filter id="k3ab" x="-20%" y="-20%" width="140%" height="140%"><feGaussianBlur stdDeviation="2.57"/></filter></defs><circle cx="0" cy="0.89" r="68.69" fill="#2a2d31" opacity="0.6" filter="url(#k3ab)"/><line x1="68.94" y1="39.8" x2="75.17" y2="43.4" stroke="#1fa8e2" stroke-width="1.6"/><line x1="79.6" y1="-0" x2="86.8" y2="-0" stroke="#1fa8e2" stroke-width="1.6"/><line x1="68.94" y1="-39.8" x2="75.17" y2="-43.4" stroke="#1fa8e2" stroke-width="1.6"/><line x1="39.8" y1="-68.94" x2="43.4" y2="-75.17" stroke="#1fa8e2" stroke-width="1.6"/><line x1="0" y1="-79.6" x2="0" y2="-86.8" stroke="#1fa8e2" stroke-width="1.6"/><line x1="-39.8" y1="-68.94" x2="-43.4" y2="-75.17" stroke="#1fa8e2" stroke-width="1.6"/><line x1="-68.94" y1="-39.8" x2="-75.17" y2="-43.4" stroke="#1fa8e2" stroke-width="1.6"/><line x1="-79.6" y1="-0" x2="-86.8" y2="-0" stroke="#1fa8e2" stroke-width="1.6"/><line x1="-68.94" y1="39.8" x2="-75.17" y2="43.4" stroke="#1fa8e2" stroke-width="1.6"/><circle r="67.8" fill="url(#k3ao)"/><circle r="65.22" fill="#1a1c1e"/><circle r="63.9" fill="url(#k3ai)"/></svg><div class="arc" style="left:31.3px;top:31.3px;width:127.4px;height:127.4px;background:conic-gradient(from 0deg,rgba(30,150,205,0) 0deg,rgba(30,150,205,0) 68deg,rgba(30,150,205,0.6) 85deg,rgba(30,150,205,0.95) 100deg,rgba(30,150,205,0.95) 135deg,rgba(30,150,205,0.5) 152deg,rgba(30,150,205,0) 170deg,rgba(30,150,205,0) 360deg)"></div><div class="face" style="left:36.42px;top:36.42px;width:117.16px;height:117.16px"></div><svg style="position:absolute;left:0;top:0" width="190" height="190" viewBox="-95 -95 190 190"><path d="M45.45 26.24L36.09 24.95L39.65 18.78Z" fill="#17b0f0"/></svg></div><div class="lbl" style="left:2px;width:200px;top:685px;letter-spacing:-0.35px">Bass</div><div class="lbl" style="left:196px;width:200px;top:685px">Virtualizer</div><div class="help" style="left:367.8px;top:677px">?</div></div><div class="p" style="left:796px"><div class="sb"><svg class="sbi" width="398" height="23" viewBox="0 0 398 23"><circle cx="17.3" cy="11.85" r="7.05" fill="#f2f2f2"/><circle cx="16.400000000000002" cy="13.2" r="2" fill="#111"/><path d="M17.5 13.2 V8.2 H19.900000000000002 V9.9 H18.5 V13.2 z" fill="#111"/><rect x="34.3" y="5.4" width="12.2" height="12.6" rx="1.3" fill="#f2f2f2"/><path d="M35.699999999999996 15.7 l2.3 -2.5 l1.2 1.3 l2.8 -3 l3.3 4.2 z" fill="#111"/><rect x="55.9" y="3.9" width="16" height="16" rx="1" fill="#3a3e43"/><circle cx="63.8" cy="12.2" r="4.5" fill="#474c52"/><path d="M58.63 15.79 A6.3 6.3 0 0 1 63.8 5.9" fill="none" stroke="#1f8c8c" stroke-width="1.3" stroke-dasharray="1.3 0.7"/><g fill="none" stroke="#f2f2f2" stroke-width="2"><path d="M271.6 13.5 v-3 a5.4 5.4 0 0 1 10.8 0 v3"/></g>
<rect x="270.6" y="11.2" width="3.7" height="6.2" rx="0.8" fill="#f2f2f2"/><rect x="279.7" y="11.2" width="3.7" height="6.2" rx="0.8" fill="#f2f2f2"/>
<rect x="294.8" y="5.9" width="7.1" height="11.4" rx="1.2" fill="none" stroke="#f2f2f2" stroke-width="1.8"/>
<rect x="291.6" y="8.2" width="1.4" height="6.8" fill="#f2f2f2"/><rect x="289.6" y="10" width="1.2" height="3.4" fill="#f2f2f2"/>
<rect x="303.9" y="8.2" width="1.4" height="6.8" fill="#f2f2f2"/><rect x="305.9" y="10" width="1.2" height="3.4" fill="#f2f2f2"/>
<path d="M320.5 4.6 c0.9 0 1.2 0.8 1.2 1.6 v3.4 l5.7 3.6 v1.5 l-5.7 -1.8 v3.6 l1.6 1.2 v1.1 l-2.8 -0.8 l-2.8 0.8 v-1.1 l1.6 -1.2 v-3.6 l-5.7 1.8 v-1.5 l5.7 -3.6 v-3.4 c0 -0.8 0.3 -1.6 1.2 -1.6 z" fill="#f2f2f2"/>
<circle cx="342.2" cy="11.7" r="5.8" fill="none" stroke="#f2f2f2" stroke-width="2.1"/><path d="M336.4 12.2 A5.8 5.8 0 0 1 340.7 6.1" fill="none" stroke="#5e5e5e" stroke-width="2.3"/>
<path d="M342.4 4.4 v3 M339 5 l1.2 2.6" stroke="#000" stroke-width="0" fill="none"/></svg><span class="time">17:41</span></div><div class="tb"><div class="btn" style="left:5.2px;width:36.5px"><svg width="36" height="36" viewBox="4.8 29.5 36 36"><rect x="13.1" y="53.4" width="6" height="2.7" fill="#f4f4f4"/><rect x="13.1" y="48.85" width="6" height="2.7" fill="#f4f4f4"/><rect x="13.1" y="44.3" width="6" height="2.7" fill="#f4f4f4"/><rect x="20.6" y="53.4" width="6" height="2.7" fill="#f4f4f4"/><rect x="20.6" y="48.85" width="6" height="2.7" fill="#f4f4f4"/><rect x="20.6" y="44.3" width="6" height="2.7" fill="#f4f4f4"/><rect x="20.6" y="39.75" width="6" height="2.7" fill="#f4f4f4"/><rect x="28.2" y="53.4" width="6" height="2.7" fill="#f4f4f4"/><rect x="28.2" y="48.85" width="6" height="2.7" fill="#f4f4f4"/></svg></div><svg class="gift" width="26" height="26" viewBox="68 34 26 26"><ellipse cx="76.9" cy="40.3" rx="2.3" ry="1.5" transform="rotate(-25 76.9 40.3)" fill="none" stroke="#f4f4f4" stroke-width="1.1"/><path d="M76.2 41.4 L77.4 43.2" stroke="#f4f4f4" stroke-width="1.1"/><rect x="71" y="43" width="19" height="4.8" fill="#f6f6f6"/><rect x="72.2" y="49.3" width="7.4" height="7.8" fill="#f6f6f6"/><rect x="81.9" y="49.3" width="7.1" height="7.8" fill="#f6f6f6"/><circle cx="86.1" cy="42.5" r="7.3" fill="#f4f4f4"/><circle cx="86.1" cy="42.5" r="6.5" fill="#e2001a"/><text x="85.8" y="45.7" font-size="9.3" text-anchor="middle" fill="#fff" font-family="Liberation Sans, sans-serif" letter-spacing="-0.5">15</text></svg><div class="title">Equalizer</div><div class="sw"><div class="swt"></div><div class="swk">ON</div></div><div class="btn" style="left:356.5px"><svg width="36" height="36" viewBox="0 0 36 36"><path d="M17.11 9.93 L18.21 8.06 L18.99 8.06 L20.09 9.93 L23.47 11.33 L25.57 10.78 L26.12 11.33 L25.57 13.43 L26.97 16.81 L28.84 17.91 L28.84 18.69 L26.97 19.79 L25.57 23.17 L26.12 25.27 L25.57 25.82 L23.47 25.27 L20.09 26.67 L18.99 28.54 L18.21 28.54 L17.11 26.67 L13.73 25.27 L11.63 25.82 L11.08 25.27 L11.63 23.17 L10.23 19.79 L8.36 18.69 L8.36 17.91 L10.23 16.81 L11.63 13.43 L11.08 11.33 L11.63 10.78 L13.73 11.33Z" fill="#f4f4f4" stroke="#f4f4f4" stroke-width="0.8" stroke-linejoin="round"/><circle cx="18.6" cy="18.3" r="8.4" fill="#f4f4f4"/><circle cx="18.6" cy="18.3" r="6.1" fill="none" stroke="#3b3f44" stroke-width="0.8"/><circle cx="18.6" cy="18.3" r="3.4" fill="#40454a"/></svg></div></div><div class="eq"><div class="eqi"><div class="dd" style="left:2.5px;top:3px;width:268px;height:34px"><span>Defined</span><i class="tri"></i></div><div class="dd" style="left:274.5px;top:3px;width:56.5px;height:34px"><svg width="56" height="34" viewBox="675 76.5 56 34"><path d="M692.9 104.7L700.32 101.94L709.59 92.68L704.92 88.01L695.66 97.28Z" fill="none" stroke="#f2f2f2" stroke-width="1.6" stroke-linejoin="round"/><path d="M696.15 101.45L707.25 90.35" fill="none" stroke="#f2f2f2" stroke-width="1.4"/><path d="M711.44 91.85L713.57 89.73Q714.84 87.89 712.13 85.47Q709.71 82.76 707.87 84.03L705.75 86.16Z" fill="#f2f2f2"/><path d="M692.9 104.7L696.21 103.49L694.11 101.39Z" fill="#f2f2f2"/></svg></div><div class="dd" style="left:334.5px;top:3px;width:56.5px;height:34px"><svg width="56" height="34" viewBox="735 76.5 56 34"><path d="M752.6 94.5H773.6M763.1 84V105" stroke="#f6f6f6" stroke-width="3" fill="none"/></svg></div><svg class="sl" width="393" height="352" viewBox="400.5 110.5 393 352"><defs><linearGradient id="th" x1="0" y1="0" x2="0" y2="1"><stop offset="0" stop-color="#c4c4c4"/><stop offset="0.06" stop-color="#b2b2b2"/><stop offset="0.25" stop-color="#9a9a9a"/><stop offset="0.26" stop-color="#808080"/><stop offset="0.5" stop-color="#868686"/><stop offset="0.74" stop-color="#8e8e8e"/><stop offset="0.76" stop-color="#5c5c5c"/><stop offset="0.9" stop-color="#8a8a8a"/><stop offset="1" stop-color="#a2a2a2"/></linearGradient></defs><path d="M465.4 137.8h8M480.8 137.8h8" stroke="#3f4347" stroke-width="1.2"/><path d="M468.4 173.7h5M480.8 173.7h5" stroke="#3f4347" stroke-width="1.2"/><path d="M465.4 209.6h8M480.8 209.6h8" stroke="#3f4347" stroke-width="1.2"/><path d="M468.4 245.5h5M480.8 245.5h5" stroke="#3f4347" stroke-width="1.2"/><path d="M465.4 281.4h8M480.8 281.4h8" stroke="#3f4347" stroke-width="1.2"/><path d="M468.4 317.3h5M480.8 317.3h5" stroke="#3f4347" stroke-width="1.2"/><path d="M465.4 353.2h8M480.8 353.2h8" stroke="#3f4347" stroke-width="1.2"/><path d="M468.4 389.1h5M480.8 389.1h5" stroke="#3f4347" stroke-width="1.2"/><path d="M465.4 425h8M480.8 425h8" stroke="#3f4347" stroke-width="1.2"/><rect x="475.2" y="134.6" width="3.6" height="293" rx="1.8" fill="#1a1c1f"/><rect x="474.9" y="223.4" width="4.2" height="204.6" rx="2" fill="#0d9fde"/><rect x="467.6" y="208.8" width="18.8" height="29.6" rx="3" fill="#1d1f22" opacity="0.55"/><rect x="468" y="208.9" width="18" height="28.7" rx="2.6" fill="url(#th)"/><rect x="470.1" y="216.2" width="13.8" height="14.6" fill="#7c7c7c" opacity="0.55"/><rect x="471" y="222.2" width="12" height="2.8" rx="1.2" fill="#19a9e6"/><path d="M535.8 137.8h8M551.2 137.8h8" stroke="#3f4347" stroke-width="1.2"/><path d="M538.8 173.7h5M551.2 173.7h5" stroke="#3f4347" stroke-width="1.2"/><path d="M535.8 209.6h8M551.2 209.6h8" stroke="#3f4347" stroke-width="1.2"/><path d="M538.8 245.5h5M551.2 245.5h5" stroke="#3f4347" stroke-width="1.2"/><path d="M535.8 281.4h8M551.2 281.4h8" stroke="#3f4347" stroke-width="1.2"/><path d="M538.8 317.3h5M551.2 317.3h5" stroke="#3f4347" stroke-width="1.2"/><path d="M535.8 353.2h8M551.2 353.2h8" stroke="#3f4347" stroke-width="1.2"/><path d="M538.8 389.1h5M551.2 389.1h5" stroke="#3f4347" stroke-width="1.2"/><path d="M535.8 425h8M551.2 425h8" stroke="#3f4347" stroke-width="1.2"/><rect x="545.6" y="134.6" width="3.6" height="293" rx="1.8" fill="#1a1c1f"/><rect x="545.3" y="186.1" width="4.2" height="241.9" rx="2" fill="#0d9fde"/><rect x="538" y="171.5" width="18.8" height="29.6" rx="3" fill="#1d1f22" opacity="0.55"/><rect x="538.4" y="171.6" width="18" height="28.7" rx="2.6" fill="url(#th)"/><rect x="540.5" y="178.9" width="13.8" height="14.6" fill="#7c7c7c" opacity="0.55"/><rect x="541.4" y="184.9" width="12" height="2.8" rx="1.2" fill="#19a9e6"/><path d="M606.2 137.8h8M621.6 137.8h8" stroke="#3f4347" stroke-width="1.2"/><path d="M609.2 173.7h5M621.6 173.7h5" stroke="#3f4347" stroke-width="1.2"/><path d="M606.2 209.6h8M621.6 209.6h8" stroke="#3f4347" stroke-width="1.2"/><path d="M609.2 245.5h5M621.6 245.5h5" stroke="#3f4347" stroke-width="1.2"/><path d="M606.2 281.4h8M621.6 281.4h8" stroke="#3f4347" stroke-width="1.2"/><path d="M609.2 317.3h5M621.6 317.3h5" stroke="#3f4347" stroke-width="1.2"/><path d="M606.2 353.2h8M621.6 353.2h8" stroke="#3f4347" stroke-width="1.2"/><path d="M609.2 389.1h5M621.6 389.1h5" stroke="#3f4347" stroke-width="1.2"/><path d="M606.2 425h8M621.6 425h8" stroke="#3f4347" stroke-width="1.2"/><rect x="616" y="134.6" width="3.6" height="293" rx="1.8" fill="#1a1c1f"/><rect x="615.7" y="251.3" width="4.2" height="176.7" rx="2" fill="#0d9fde"/><rect x="608.4" y="236.7" width="18.8" height="29.6" rx="3" fill="#1d1f22" opacity="0.55"/><rect x="608.8" y="236.8" width="18" height="28.7" rx="2.6" fill="url(#th)"/><rect x="610.9" y="244.1" width="13.8" height="14.6" fill="#7c7c7c" opacity="0.55"/><rect x="611.8" y="250.1" width="12" height="2.8" rx="1.2" fill="#19a9e6"/><path d="M676.6 137.8h8M692 137.8h8" stroke="#3f4347" stroke-width="1.2"/><path d="M679.6 173.7h5M692 173.7h5" stroke="#3f4347" stroke-width="1.2"/><path d="M676.6 209.6h8M692 209.6h8" stroke="#3f4347" stroke-width="1.2"/><path d="M679.6 245.5h5M692 245.5h5" stroke="#3f4347" stroke-width="1.2"/><path d="M676.6 281.4h8M692 281.4h8" stroke="#3f4347" stroke-width="1.2"/><path d="M679.6 317.3h5M692 317.3h5" stroke="#3f4347" stroke-width="1.2"/><path d="M676.6 353.2h8M692 353.2h8" stroke="#3f4347" stroke-width="1.2"/><path d="M679.6 389.1h5M692 389.1h5" stroke="#3f4347" stroke-width="1.2"/><path d="M676.6 425h8M692 425h8" stroke="#3f4347" stroke-width="1.2"/><rect x="686.4" y="134.6" width="3.6" height="293" rx="1.8" fill="#1a1c1f"/><rect x="686.1" y="203.1" width="4.2" height="224.9" rx="2" fill="#0d9fde"/><rect x="678.8" y="188.5" width="18.8" height="29.6" rx="3" fill="#1d1f22" opacity="0.55"/><rect x="679.2" y="188.6" width="18" height="28.7" rx="2.6" fill="url(#th)"/><rect x="681.3" y="195.9" width="13.8" height="14.6" fill="#7c7c7c" opacity="0.55"/><rect x="682.2" y="201.9" width="12" height="2.8" rx="1.2" fill="#19a9e6"/><path d="M747 137.8h8M762.4 137.8h8" stroke="#3f4347" stroke-width="1.2"/><path d="M750 173.7h5M762.4 173.7h5" stroke="#3f4347" stroke-width="1.2"/><path d="M747 209.6h8M762.4 209.6h8" stroke="#3f4347" stroke-width="1.2"/><path d="M750 245.5h5M762.4 245.5h5" stroke="#3f4347" stroke-width="1.2"/><path d="M747 281.4h8M762.4 281.4h8" stroke="#3f4347" stroke-width="1.2"/><path d="M750 317.3h5M762.4 317.3h5" stroke="#3f4347" stroke-width="1.2"/><path d="M747 353.2h8M762.4 353.2h8" stroke="#3f4347" stroke-width="1.2"/><path d="M750 389.1h5M762.4 389.1h5" stroke="#3f4347" stroke-width="1.2"/><path d="M747 425h8M762.4 425h8" stroke="#3f4347" stroke-width="1.2"/><rect x="756.8" y="134.6" width="3.6" height="293" rx="1.8" fill="#1a1c1f"/><rect x="756.5" y="231.5" width="4.2" height="196.5" rx="2" fill="#0d9fde"/><rect x="749.2" y="216.9" width="18.8" height="29.6" rx="3" fill="#1d1f22" opacity="0.55"/><rect x="749.6" y="217" width="18" height="28.7" rx="2.6" fill="url(#th)"/><rect x="751.7" y="224.3" width="13.8" height="14.6" fill="#7c7c7c" opacity="0.55"/><rect x="752.6" y="230.3" width="12" height="2.8" rx="1.2" fill="#19a9e6"/></svg><div class="db" style="top:59.4px">15</div><div class="db" style="top:202px">0</div><div class="db" style="top:343.8px;letter-spacing:-0.2px">-15</div><div class="hz" style="left:46.5px">60Hz</div><div class="hz" style="left:116.9px">230Hz</div><div class="hz" style="left:187.3px">910Hz</div><div class="hz" style="left:257.7px">3.6KHz</div><div class="hz" style="left:328.1px">14KHz</div></div></div><div class="rv">Reverb</div><div class="dd rvd"><span>Middle Room</span><i class="tri"></i></div><div class="knob" style="left:6.8px;top:501px;width:190px;height:190px"><svg width="190" height="190" viewBox="-95 -95 190 190"><defs><linearGradient id="k2bo" x1="0" y1="0" x2="0" y2="1"><stop offset="0" stop-color="#494d53"/><stop offset="1" stop-color="#4b4f54"/></linearGradient><linearGradient id="k2bi" x1="0" y1="0" x2="0.35" y2="1"><stop offset="0" stop-color="#41454b"/><stop offset="0.45" stop-color="#363a3e"/><stop offset="1" stop-color="#2f3337"/></linearGradient><filter id="k2bb" x="-20%" y="-20%" width="140%" height="140%"><feGaussianBlur stdDeviation="2.57"/></filter></defs><circle cx="0" cy="0.89" r="68.69" fill="#2a2d31" opacity="0.6" filter="url(#k2bb)"/><line x1="68.94" y1="39.8" x2="75.17" y2="43.4" stroke="#1fa8e2" stroke-width="1.6"/><line x1="79.6" y1="-0" x2="86.8" y2="-0" stroke="#1fa8e2" stroke-width="1.6"/><line x1="68.94" y1="-39.8" x2="75.17" y2="-43.4" stroke="#1fa8e2" stroke-width="1.6"/><line x1="39.8" y1="-68.94" x2="43.4" y2="-75.17" stroke="#1fa8e2" stroke-width="1.6"/><line x1="0" y1="-79.6" x2="0" y2="-86.8" stroke="#1fa8e2" stroke-width="1.6"/><line x1="-39.8" y1="-68.94" x2="-43.4" y2="-75.17" stroke="#1fa8e2" stroke-width="1.6"/><line x1="-68.94" y1="-39.8" x2="-75.17" y2="-43.4" stroke="#1fa8e2" stroke-width="1.6"/><line x1="-79.6" y1="-0" x2="-86.8" y2="-0" stroke="#1fa8e2" stroke-width="1.6"/><line x1="-68.94" y1="39.8" x2="-75.17" y2="43.4" stroke="#1fa8e2" stroke-width="1.6"/><circle r="67.8" fill="url(#k2bo)"/><circle r="65.22" fill="#1a1c1e"/><circle r="63.9" fill="url(#k2bi)"/></svg><div class="arc" style="left:31.3px;top:31.3px;width:127.4px;height:127.4px;background:conic-gradient(from 0deg,rgba(30,150,205,0) 0deg,rgba(30,150,205,0) 68deg,rgba(30,150,205,0.6) 85deg,rgba(30,150,205,0.95) 100deg,rgba(30,150,205,0.95) 135deg,rgba(30,150,205,0.5) 152deg,rgba(30,150,205,0) 170deg,rgba(30,150,205,0) 360deg)"></div><div class="face" style="left:36.42px;top:36.42px;width:117.16px;height:117.16px"></div><svg style="position:absolute;left:0;top:0" width="190" height="190" viewBox="-95 -95 190 190"><path d="M45.45 26.24L36.09 24.95L39.65 18.78Z" fill="#17b0f0"/></svg></div><div class="knob" style="left:200.8px;top:501px;width:190px;height:190px"><svg width="190" height="190" viewBox="-95 -95 190 190"><defs><linearGradient id="k3bo" x1="0" y1="0" x2="0" y2="1"><stop offset="0" stop-color="#494d53"/><stop offset="1" stop-color="#4b4f54"/></linearGradient><linearGradient id="k3bi" x1="0" y1="0" x2="0.35" y2="1"><stop offset="0" stop-color="#41454b"/><stop offset="0.45" stop-color="#363a3e"/><stop offset="1" stop-color="#2f3337"/></linearGradient><filter id="k3bb" x="-20%" y="-20%" width="140%" height="140%"><feGaussianBlur stdDeviation="2.57"/></filter></defs><circle cx="0" cy="0.89" r="68.69" fill="#2a2d31" opacity="0.6" filter="url(#k3bb)"/><line x1="68.94" y1="39.8" x2="75.17" y2="43.4" stroke="#1fa8e2" stroke-width="1.6"/><line x1="79.6" y1="-0" x2="86.8" y2="-0" stroke="#1fa8e2" stroke-width="1.6"/><line x1="68.94" y1="-39.8" x2="75.17" y2="-43.4" stroke="#1fa8e2" stroke-width="1.6"/><line x1="39.8" y1="-68.94" x2="43.4" y2="-75.17" stroke="#1fa8e2" stroke-width="1.6"/><line x1="0" y1="-79.6" x2="0" y2="-86.8" stroke="#1fa8e2" stroke-width="1.6"/><line x1="-39.8" y1="-68.94" x2="-43.4" y2="-75.17" stroke="#1fa8e2" stroke-width="1.6"/><line x1="-68.94" y1="-39.8" x2="-75.17" y2="-43.4" stroke="#1fa8e2" stroke-width="1.6"/><line x1="-79.6" y1="-0" x2="-86.8" y2="-0" stroke="#1fa8e2" stroke-width="1.6"/><line x1="-68.94" y1="39.8" x2="-75.17" y2="43.4" stroke="#1fa8e2" stroke-width="1.6"/><circle r="67.8" fill="url(#k3bo)"/><circle r="65.22" fill="#1a1c1e"/><circle r="63.9" fill="url(#k3bi)"/></svg><div class="arc" style="left:31.3px;top:31.3px;width:127.4px;height:127.4px;background:conic-gradient(from 0deg,rgba(30,150,205,0) 0deg,rgba(30,150,205,0) 68deg,rgba(30,150,205,0.6) 85deg,rgba(30,150,205,0.95) 100deg,rgba(30,150,205,0.95) 135deg,rgba(30,150,205,0.5) 152deg,rgba(30,150,205,0) 170deg,rgba(30,150,205,0) 360deg)"></div><div class="face" style="left:36.42px;top:36.42px;width:117.16px;height:117.16px"></div><svg style="position:absolute;left:0;top:0" width="190" height="190" viewBox="-95 -95 190 190"><path d="M45.45 26.24L36.09 24.95L39.65 18.78Z" fill="#17b0f0"/></svg></div><div class="lbl" style="left:2px;width:200px;top:685px;letter-spacing:-0.35px">Bass</div><div class="lbl" style="left:196px;width:200px;top:685px">Virtualizer</div><div class="help" style="left:367.8px;top:677px">?</div><div class="dim"></div><div class="dlg"><div class="dt">Save</div><div class="dbody"><div class="inp">test 1</div></div><div class="dbtn"><div>Cancel</div><div>Ok</div></div></div></div></body></html>
